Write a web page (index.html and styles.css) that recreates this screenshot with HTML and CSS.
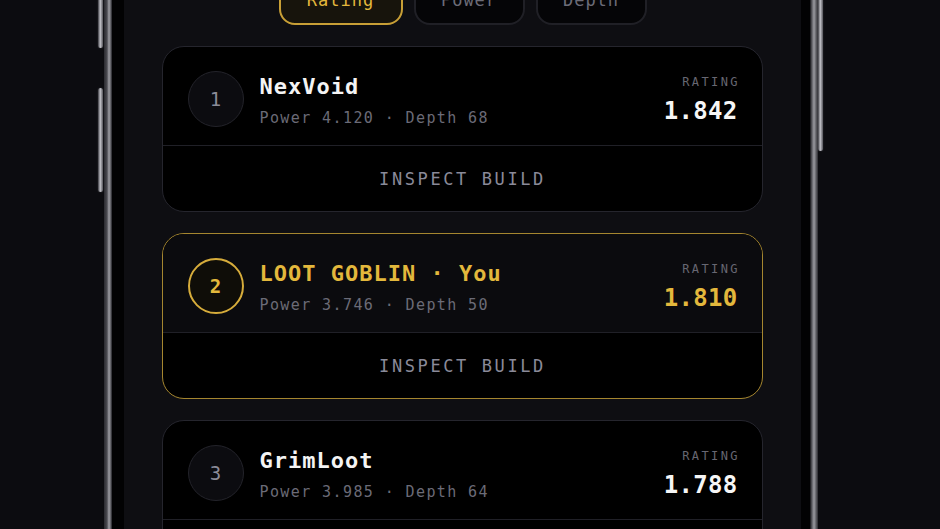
FILE: index.html
```html
<!DOCTYPE html>
<html>
<head>
<meta charset="utf-8">
<link rel="stylesheet" href="styles.css">
</head>
<body>
<div class="stage">
  <div class="buttons-left">
    <span class="btn btn-a"></span>
    <span class="btn btn-b"></span>
  </div>
  <div class="phone">
    <div class="bezel">
      <div class="screen">
        <div class="tabs">
          <div class="tab active">Rating</div>
          <div class="tab">Power</div>
          <div class="tab">Depth</div>
        </div>
        <div class="list">
          <div class="card">
            <div class="card-top">
              <div class="rank">1</div>
              <div class="info">
                <div class="name">NexVoid</div>
                <div class="meta">Power 4.120 · Depth 68</div>
              </div>
              <div class="rating">
                <div class="rating-label">RATING</div>
                <div class="rating-value">1.842</div>
              </div>
            </div>
            <div class="card-action">INSPECT BUILD</div>
          </div>
          <div class="card you">
            <div class="card-top">
              <div class="rank">2</div>
              <div class="info">
                <div class="name">LOOT GOBLIN · You</div>
                <div class="meta">Power 3.746 · Depth 50</div>
              </div>
              <div class="rating">
                <div class="rating-label">RATING</div>
                <div class="rating-value">1.810</div>
              </div>
            </div>
            <div class="card-action">INSPECT BUILD</div>
          </div>
          <div class="card">
            <div class="card-top">
              <div class="rank">3</div>
              <div class="info">
                <div class="name">GrimLoot</div>
                <div class="meta">Power 3.985 · Depth 64</div>
              </div>
              <div class="rating">
                <div class="rating-label">RATING</div>
                <div class="rating-value">1.788</div>
              </div>
            </div>
            <div class="card-action">INSPECT BUILD</div>
          </div>
        </div>
      </div>
    </div>
  </div>
  <div class="buttons-right">
    <span class="btn btn-c"></span>
  </div>
</div>
</body>
</html>
```
FILE: styles.css
```css
* { box-sizing: border-box; }
html, body {
  margin: 0;
  padding: 0;
  width: 940px;
  height: 529px;
  overflow: hidden;
  background: #0c0c10;
  font-family: "DejaVu Sans Mono", "Liberation Mono", monospace;
}
.stage {
  display: flex;
  align-items: stretch;
  height: 529px;
  padding-left: 98px;
}
.buttons-left, .buttons-right {
  display: flex;
  flex-direction: column;
  width: 6px;
}
.btn {
  display: block;
  width: 5px;
  border-radius: 3px;
  background: linear-gradient(90deg, #3a3a40 0%, #c4c4ca 45%, #55555b 100%);
  box-shadow: 0 0 2px rgba(255,255,255,0.15);
}
.btn-a { height: 52px; margin-top: -4px; }
.btn-b { height: 104px; margin-top: 40px; }
.btn-c { height: 153px; margin-top: -2px; }
.phone {
  width: 714px;
  height: 529px;
  padding: 0 8px;
  background: linear-gradient(90deg,
    #2a2a2f 0px, #4a4a50 3px, #a0a0a6 5px, #55555b 7px, #1c1c20 8px,
    #111114 calc(100% - 8px), #5e5e64 calc(100% - 6px), #9a9aa0 calc(100% - 4px), #2a2a2f 100%);
}
.bezel {
  height: 100%;
  background: #020203;
  padding: 0 9px 0 12px;
}
.screen {
  height: 100%;
  background: #0e0e12;
  display: flex;
  flex-direction: column;
  align-items: center;
  overflow: hidden;
}
.tabs {
  display: flex;
  gap: 11px;
  margin-top: -25px;
  height: 50px;
}
.tab {
  width: 111px;
  height: 50px;
  border: 2px solid #202026;
  border-radius: 16px;
  background: #050507;
  color: #6c6c78;
  font-size: 17px;
  display: flex;
  align-items: center;
  justify-content: center;
  letter-spacing: 1px;
}
.tab.active {
  width: 124px;
  border-color: #c89f36;
  background: #17140c;
  color: #e3b83c;
}
.list {
  margin-top: 21px;
  display: flex;
  flex-direction: column;
  gap: 21px;
  width: 601px;
}
.card {
  border: 1.5px solid #25252d;
  border-radius: 22px;
  background: #000;
  overflow: hidden;
}
.card-top {
  display: flex;
  align-items: center;
  padding: 24px 24.5px 18px 24.5px;
  border-bottom: 1px solid #202027;
}
.rank {
  width: 56px;
  height: 56px;
  border-radius: 50%;
  border: 1.5px solid #23232a;
  background: #0c0c10;
  color: #8b8b98;
  font-size: 19px;
  display: flex;
  align-items: center;
  justify-content: center;
  flex: none;
}
.info {
  flex: 1;
  margin-left: 16px;
  display: flex;
  flex-direction: column;
  gap: 10px;
  padding-top: 4px;
}
.name {
  color: #f4f4f4;
  font-size: 22px;
  font-weight: bold;
  letter-spacing: 1px;
  line-height: 24px;
}
.meta {
  color: #6b6b77;
  font-size: 15px;
  letter-spacing: 1.4px;
  line-height: 18px;
}
.rating {
  display: flex;
  flex-direction: column;
  align-items: flex-end;
  gap: 9px;
}
.rating-label {
  color: #676772;
  font-size: 12px;
  letter-spacing: 2.4px;
  margin-right: -2.4px;
  line-height: 14px;
}
.rating-value {
  color: #f6f6f6;
  font-size: 24px;
  font-weight: bold;
  line-height: 26px;
  letter-spacing: 0.3px;
}
.card-action {
  height: 65px;
  display: flex;
  align-items: center;
  justify-content: center;
  color: #8a8a99;
  font-size: 17px;
  letter-spacing: 2.6px;
  padding-top: 1px;
}
.card.you {
  border-color: #a5862f;
}
.card.you .card-top {
  background: #0b0b0e;
}
.card.you .rank {
  border: 2px solid #d6ac3b;
  background: #0f0d08;
  color: #e3b83c;
  font-weight: bold;
}
.card.you .name,
.card.you .rating-value {
  color: #e3b83c;
}
```
